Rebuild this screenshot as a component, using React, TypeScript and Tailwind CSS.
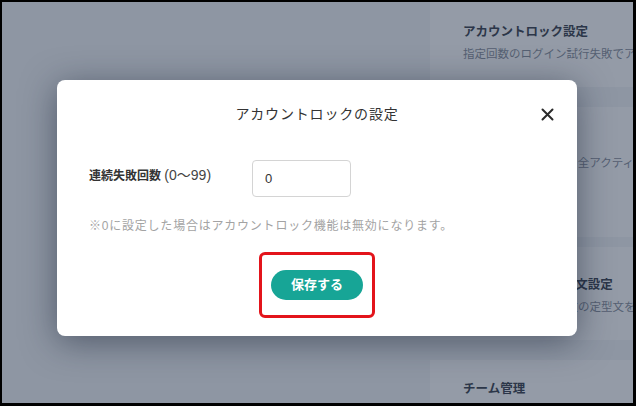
import React from 'react';

const font = { fontFamily: '"Liberation Sans", "Noto Sans CJK JP", sans-serif' };

interface SettingCardProps {
  title: string;
  description: string;
  className: string;
}

const SettingCard: React.FC<SettingCardProps> = ({ title, description, className }) => (
  <div className={`w-[320px] shrink-0 bg-[#fafbfc] pl-[33px] ${className}`}>
    <p className="text-[12.5px] leading-[20px] font-semibold text-[#2b3140] whitespace-nowrap">{title}</p>
    {description && (
      <p className="mt-[4px] text-[11.5px] leading-[16px] text-[#7d8594] whitespace-nowrap">{description}</p>
    )}
  </div>
);

const CloseIcon = () => (
  <svg width="13" height="13" viewBox="0 0 13 13" fill="none">
    <path d="M1.5 1.5L11.5 11.5M11.5 1.5L1.5 11.5" stroke="#2a2a2a" strokeWidth="2" strokeLinecap="round" />
  </svg>
);

export default function App() {
  return (
    <div className="w-[636px] h-[406px] bg-black border-t-2 border-l-2 border-r-[3px] border-b-[3px] border-black" style={font}>
      <div className="relative w-full h-full overflow-hidden bg-[#eef0f4]">
        {/* page underneath */}
        <div className="flex h-full">
          <div className="w-[428px] shrink-0" />
          <div className="flex flex-col overflow-hidden">
            <SettingCard className="h-[85px] pt-[20px]" title="アカウントロック設定" description="指定回数のログイン試行失敗でアカウントをロックします" />
            <SettingCard className="mt-[20px] h-[130px] pt-[24px]" title="セッション管理" description="ログイン中のユーザー全アクティブセッションを管理" />
            <SettingCard className="mt-[10px] h-[93px] pt-[28px]" title="招待用メッセージ本文設定" description="招待メール送信時本文の定型文を設定します" />
            <SettingCard className="mt-[20px] h-[60px] pt-[19px]" title="チーム管理" description="" />
          </div>
        </div>

        {/* overlay + modal */}
        <div className="absolute inset-0 bg-[rgba(46,60,82,0.5)] flex justify-center pt-[78px] pr-[1px]">
          <div className="w-[520px] h-[256px] bg-white rounded-[8px] shadow-[0_6px_34px_rgba(20,30,50,0.5)] flex flex-col">
            <div className="h-[68px] grid grid-cols-[1fr_auto_1fr] items-center">
              <div />
              <h2 className="text-[14px] tracking-[0.06em] text-[#333]">アカウントロックの設定</h2>
              <div className="flex justify-end pr-[22px]">
                <button className="w-[16px] h-[16px] flex items-center justify-center">
                  <CloseIcon />
                </button>
              </div>
            </div>

            <div className="pl-[32px] pt-[12px]">
              <div className="flex items-center">
                <label className="w-[163px] mb-[7px] text-[12px] text-[#333]">
                  <span className="font-bold">連続失敗回数</span> <span className="text-[14px] text-[#444]">(0〜99)</span>
                </label>
                <input
                  defaultValue="0"
                  className="w-[99px] h-[37px] rounded-[4px] border border-[#d4d4d4] px-[12px] text-[13px] text-[#333] outline-none"
                />
              </div>
              <p className="mt-[21px] text-[12px] leading-[16px] tracking-[0.065em] text-[#a3a3a3]">
                ※0に設定した場合はアカウントロック機能は無効になります。
              </p>
            </div>

            <div className="mt-[18px] flex justify-center">
              <div className="border-[3px] border-[#e3141b] rounded-[6px] px-[9px] py-[15px]">
                <button className="w-[92px] h-[30px] rounded-full bg-[#17a596] text-white text-[13px] font-bold">
                  保存する
                </button>
              </div>
            </div>
          </div>
        </div>
      </div>
    </div>
  );
}
